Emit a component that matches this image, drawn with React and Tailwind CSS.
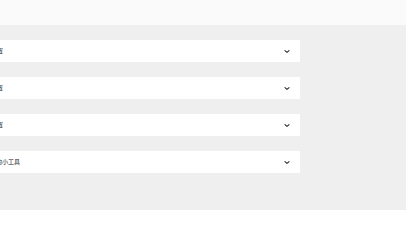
const ROWS = [
  { label: '基本设置', offset: '-ml-[21px]' },
  { label: '显示设置', offset: '-ml-[21px]' },
  { label: '通知设置', offset: '-ml-[21px]' },
  { label: '实用的小工具', offset: '-ml-[16px]' },
];

function ChevronDown() {
  return (
    <svg className="w-[8px] h-[7px] text-[#222]" viewBox="0 0 24 24" fill="none" stroke="currentColor" strokeWidth={3.5} strokeLinecap="round" strokeLinejoin="round">
      <path d="M5 9l7 6 7-6" />
    </svg>
  );
}

function SettingRow({ label, offset }) {
  return (
    <div className="w-[300px] h-[22px] bg-white flex items-center justify-between pr-[9px]">
      <span className={`${offset} text-[6px] leading-none text-[#111] whitespace-nowrap`}>{label}</span>
      <ChevronDown />
    </div>
  );
}

export default function App() {
  return (
    <div
      className="w-[406px] h-[210px] overflow-hidden bg-[#fafafa] flex flex-col"
      style={{ fontFamily: '"Noto Sans CJK SC", "Noto Sans", sans-serif' }}
    >
      <div className="h-[25px] flex-shrink-0" />
      <div className="flex-1 bg-[#efefef] pt-[15px] flex flex-col gap-[15px]">
        {ROWS.map((row) => (
          <SettingRow key={row.label} label={row.label} offset={row.offset} />
        ))}
      </div>
    </div>
  );
}
